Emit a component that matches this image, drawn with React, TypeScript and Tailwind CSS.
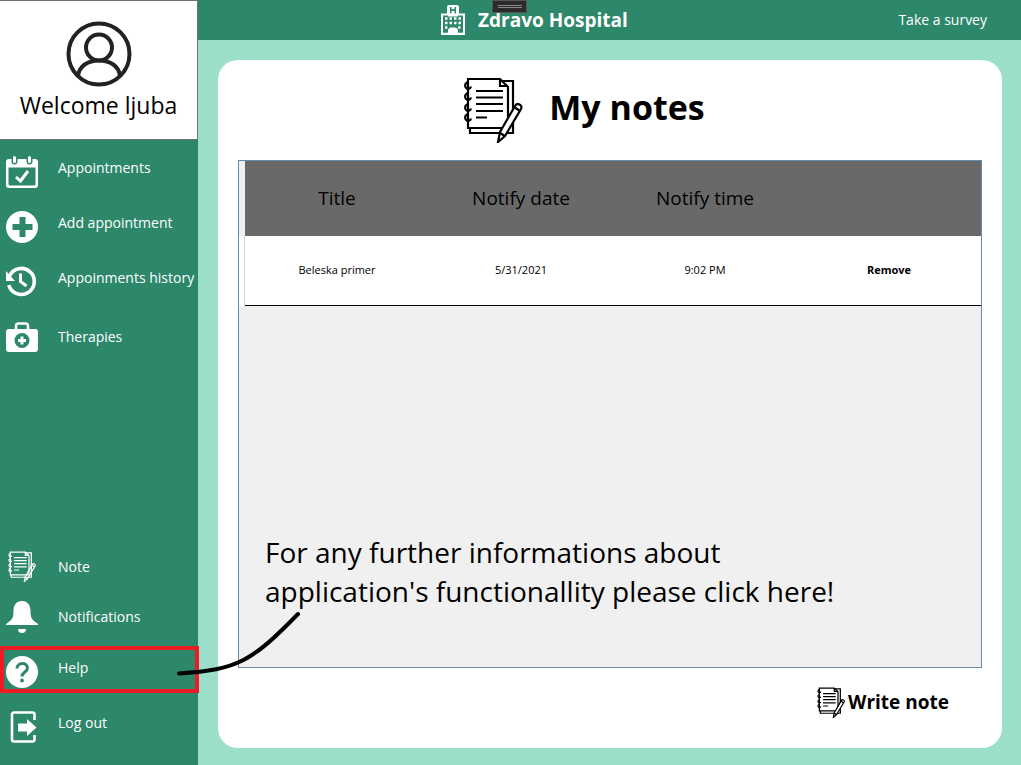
import React from "react";

type IconProps = { className?: string };

function NotebookIcon({ className, fill = "none", strokeWidth = 2 }: IconProps & { fill?: string; strokeWidth?: number }) {
  return (
    <svg viewBox="0 0 60 66" className={className} fill="none" stroke="currentColor" strokeWidth={strokeWidth} aria-hidden="true">
      <path d="M37 4h13v52H7v-6" />
      <path d="M5 2h32l8 8v41H5z" fill={fill} />
      <path d="M37 2v7h8" />
      <path d="M6 5.500H4a3 3.300 0 1 0 4 4M6 16.500H4a3 3.300 0 1 0 4 4M6 27.500H4a3 3.300 0 1 0 4 4M6 37.500H4a3 3.300 0 1 0 4 4" />
      <path d="M13 14h27M13 20.500h27M13 27h27M13 34h27M13 40.500h11" />
      <path d="M52 29c2-4 8-1 6 3L42 59l-7 6 2-10z" fill={fill} />
      <path d="M51 30l6 4M37 56l5 3" />
    </svg>
  );
}

function UserIcon({ className }: IconProps) {
  return (
    <svg viewBox="0 0 66 66" className={className} fill="none" stroke="#222" strokeWidth="4" aria-hidden="true">
      <circle cx="33" cy="33" r="30.500" />
      <circle cx="33" cy="26.500" r="13" />
      <path d="M12 55c1-10 10-15.500 21-15.500s20 5.500 21 15.500" />
    </svg>
  );
}

function CalendarIcon({ className }: IconProps) {
  return (
    <svg viewBox="0 0 32 32" className={className} aria-hidden="true">
      <path fillRule="evenodd" fill="currentColor" d="M3 3h26a3 3 0 0 1 3 3v23a3 3 0 0 1-3 3H3a3 3 0 0 1-3-3V6a3 3 0 0 1 3-3zM2.500 11.500V28a1.500 1.500 0 0 0 1.500 1.500h24a1.500 1.500 0 0 0 1.500-1.500V11.500z" />
      <path d="M8.500 1.500v4M23.500 1.500v4" stroke="#2d876a" strokeWidth="6" strokeLinecap="round" />
      <path d="M8.500 1.500v4M23.500 1.500v4" stroke="currentColor" strokeWidth="3" strokeLinecap="round" />
      <path d="M10 21l4.500 4L22 15" fill="none" stroke="currentColor" strokeWidth="3" />
    </svg>
  );
}

function PlusIcon({ className }: IconProps) {
  return (
    <svg viewBox="0 0 32 32" className={className} aria-hidden="true">
      <circle cx="16" cy="16" r="16" fill="currentColor" />
      <path d="M16.500 6v20M6.500 16h20" stroke="#2d876a" strokeWidth="6" />
    </svg>
  );
}

function HistoryIcon({ className }: IconProps) {
  return (
    <svg viewBox="0 0 32 32" className={className} aria-hidden="true">
      <path d="M3.500 10A13 13 0 1 1 2.800 19" fill="none" stroke="currentColor" strokeWidth="3.600" />
      <path d="M-1 4v11h10z" fill="currentColor" />
      <path d="M14.500 7.500v8l6 4.500" fill="none" stroke="currentColor" strokeWidth="3" />
    </svg>
  );
}

function KitIcon({ className }: IconProps) {
  return (
    <svg viewBox="0 0 32 32" className={className} aria-hidden="true">
      <path d="M10 9V5a2.500 2.500 0 0 1 2.500-2.500h7A2.500 2.500 0 0 1 22 5v4" fill="none" stroke="currentColor" strokeWidth="2.500" />
      <rect y="8" width="32" height="23" rx="3" fill="currentColor" />
      <circle cx="16" cy="19.500" r="7.500" fill="#2d876a" />
      <path d="M16 15.500v8M12 19.500h8" stroke="currentColor" strokeWidth="3" />
    </svg>
  );
}

function BellIcon({ className }: IconProps) {
  return (
    <svg viewBox="0 0 32 32" className={className} fill="currentColor" aria-hidden="true">
      <path d="M16 0c6 0 8.500 4.500 8.500 10 0 7 1.500 9 7.500 13v1H0v-1c6-4 7.500-6 7.500-13C7.500 4.500 10 0 16 0zM12 28h8a4 4 0 0 1-8 0z" />
    </svg>
  );
}

function HelpIcon({ className }: IconProps) {
  return (
    <svg viewBox="0 0 32 32" className={className} aria-hidden="true">
      <circle cx="16" cy="16" r="16" fill="currentColor" />
      <path d="M11 12.500c0-6.500 10.500-6.500 10.500-0.500 0 4-5.500 4-5.500 8.500" fill="none" stroke="#2d876a" strokeWidth="3" />
      <circle cx="16" cy="24.500" r="1.900" fill="#2d876a" />
    </svg>
  );
}

function LogoutIcon({ className }: IconProps) {
  return (
    <svg viewBox="0 0 32 32" className={className} aria-hidden="true">
      <path d="M28.500 9V3.500a2 2 0 0 0-2-2H8a2 2 0 0 0-2 2v25a2 2 0 0 0 2 2h18.500a2 2 0 0 0 2-2V24" fill="none" stroke="currentColor" strokeWidth="2.600" />
      <path d="M12 12.500h9V8l9.500 8.500L21 25v-4.500h-9z" fill="currentColor" />
    </svg>
  );
}

function HospitalIcon({ className }: IconProps) {
  return (
    <svg viewBox="0 0 24 30" className={className} aria-hidden="true">
      <path d="M0 8.500h6V2a2 2 0 0 1 2-2h8a2 2 0 0 1 2 2v6.500h6V30H0z" fill="currentColor" />
      <g fill="#2d876a">
        <path d="M9 2h1.500v2.200h3V2H15v6.500h-1.500V6h-3v2.500H9z" />
        <path d="M2 10.500h5v1h10v-1h5V28h-6v-5H8v5H2z" />
      </g>
      <path d="M4 13.500h16M4 18h16M4 22.500h4M17 22.500h3" stroke="currentColor" strokeWidth="2.500" strokeDasharray="2.500 2" />
      <path d="M0 28.800h24M8 28v-3l2-1.500h4l2 1.500v3z" fill="currentColor" stroke="currentColor" strokeWidth="2" />
    </svg>
  );
}

function NavItem({ icon, label, centered = false, children }: { icon: React.ReactNode; label: string; centered?: boolean; children?: React.ReactNode }) {
  return (
    <li className="relative">
      <a href="#" className={centered ? "flex h-8 items-center gap-5 pl-[6px]" : "flex h-8 items-start gap-5 pl-[6px]"}>
        <span className="flex h-8 w-8 shrink-0 justify-center">{icon}</span>
        <span className="whitespace-nowrap text-sm leading-6">{label}</span>
      </a>
      {children}
    </li>
  );
}

const notes = [{ title: "Beleska primer", date: "5/31/2021", time: "9:02 PM" }];

export default function App() {
  return (
    <div className="flex min-h-screen bg-[#9bdec9] font-['Open_Sans','Noto_Sans',sans-serif] text-black">
      <aside className="relative z-10 flex w-[198px] shrink-0 flex-col bg-[#2d876a] text-white">
        <div className="flex h-[140px] flex-col items-center border-y border-r border-[#707070] bg-white pt-5 text-black">
          <UserIcon className="h-[66px] w-[66px]" />
          <p className="text-[23px] leading-9">Welcome ljuba</p>
        </div>
        <nav className="flex flex-1 flex-col justify-between pt-4 pb-[22px]">
          <ul className="flex flex-col gap-[23px]">
            <NavItem icon={<CalendarIcon className="size-8" />} label="Appointments" />
            <NavItem icon={<PlusIcon className="size-8" />} label="Add appointment" />
            <NavItem icon={<HistoryIcon className="size-8" />} label="Appoinments history" />
            <NavItem centered icon={<KitIcon className="size-8" />} label="Therapies" />
          </ul>
          <div className="flex flex-col gap-[23px]">
            <ul className="flex flex-col gap-[18px]">
              <NavItem centered icon={<NotebookIcon className="h-[31px] w-7" strokeWidth={2.6} />} label="Note" />
              <NavItem centered icon={<BellIcon className="size-8" />} label="Notifications" />
            </ul>
            <ul className="flex flex-col gap-[23px]">
              <NavItem icon={<HelpIcon className="size-8" />} label="Help">
                <div className="pointer-events-none absolute -top-[10px] left-0 h-[47px] w-[199px] border-4 border-[#ed1c24]" />
                <svg viewBox="0 0 130 70" className="pointer-events-none absolute -top-[46px] left-[174px] h-[70px] w-[130px]" aria-hidden="true">
                  <path d="M5 63.500C64 60 78 51 124 4" fill="none" stroke="#000" strokeWidth="4" strokeLinecap="round" />
                </svg>
              </NavItem>
              <NavItem icon={<LogoutIcon className="size-8" />} label="Log out" />
            </ul>
          </div>
        </nav>
      </aside>

      <div className="flex min-w-0 flex-1 flex-col">
        <header className="relative flex h-10 items-center bg-[#2d876a] pr-[34px] pl-[243px] text-white">
          <HospitalIcon className="h-[30px] w-6" />
          <h1 className="ml-[13px] text-[19px] leading-10 font-bold">Zdravo Hospital</h1>
          <a href="#" className="ml-auto text-sm leading-10">Take a survey</a>
          <div className="absolute top-0 left-[294px] flex h-[13px] w-[35px] flex-col items-center justify-center gap-px border border-[#555] bg-[#2b2b2d]">
            <span className="h-px w-6 bg-[#888]" />
            <span className="h-px w-6 bg-[#888]" />
          </div>
        </header>

        <main className="mt-5 mr-[19px] mb-[17px] ml-5 flex flex-1 flex-col rounded-[20px] bg-white px-5">
          <div className="flex h-[100px] items-start justify-center gap-[26px] pt-[17px] pr-[52px]">
            <NotebookIcon className="h-[66px] w-[60px]" fill="#fff" strokeWidth={2.2} />
            <h2 className="text-[34px] leading-[60px] font-bold">My notes</h2>
          </div>

          <section className="relative flex-1 border border-[#688caf] bg-[#f0f0f0]">
            <table className="w-full table-fixed border-separate border-spacing-0 text-center">
              <thead>
                <tr className="h-[75px] text-[19px]">
                  <td className="w-[6px] p-0" />
                  <th className="bg-[#696969] p-0 font-normal">Title</th>
                  <th className="bg-[#696969] p-0 font-normal">Notify date</th>
                  <th className="bg-[#696969] p-0 font-normal">Notify time</th>
                  <td className="bg-[#696969] p-0" />
                </tr>
              </thead>
              <tbody>
                {notes.map((note) => (
                  <tr key={note.title} className="h-[70px] bg-white text-[11px]">
                    <td className="border-r border-[#d0d0d0] bg-white p-0" />
                    <td className="border-b border-black p-0">{note.title}</td>
                    <td className="border-b border-black p-0">{note.date}</td>
                    <td className="border-b border-black p-0">{note.time}</td>
                    <td className="border-b border-black p-0">
                      <button type="button" className="font-bold">Remove</button>
                    </td>
                  </tr>
                ))}
              </tbody>
            </table>
            <p className="absolute bottom-14 left-[26px] text-[28px] leading-[39px] whitespace-nowrap">
              For any further informations about
              <br />
              application's functionallity please click here!
            </p>
          </section>

          <div className="flex h-20 items-start justify-end pt-[18px] pr-[33px]">
            <button type="button" className="flex items-center gap-[3px] text-[19px] leading-8 font-bold">
              <NotebookIcon className="h-[31px] w-7" fill="#fff" strokeWidth={2.6} />
              Write note
            </button>
          </div>
        </main>
      </div>
    </div>
  );
}
